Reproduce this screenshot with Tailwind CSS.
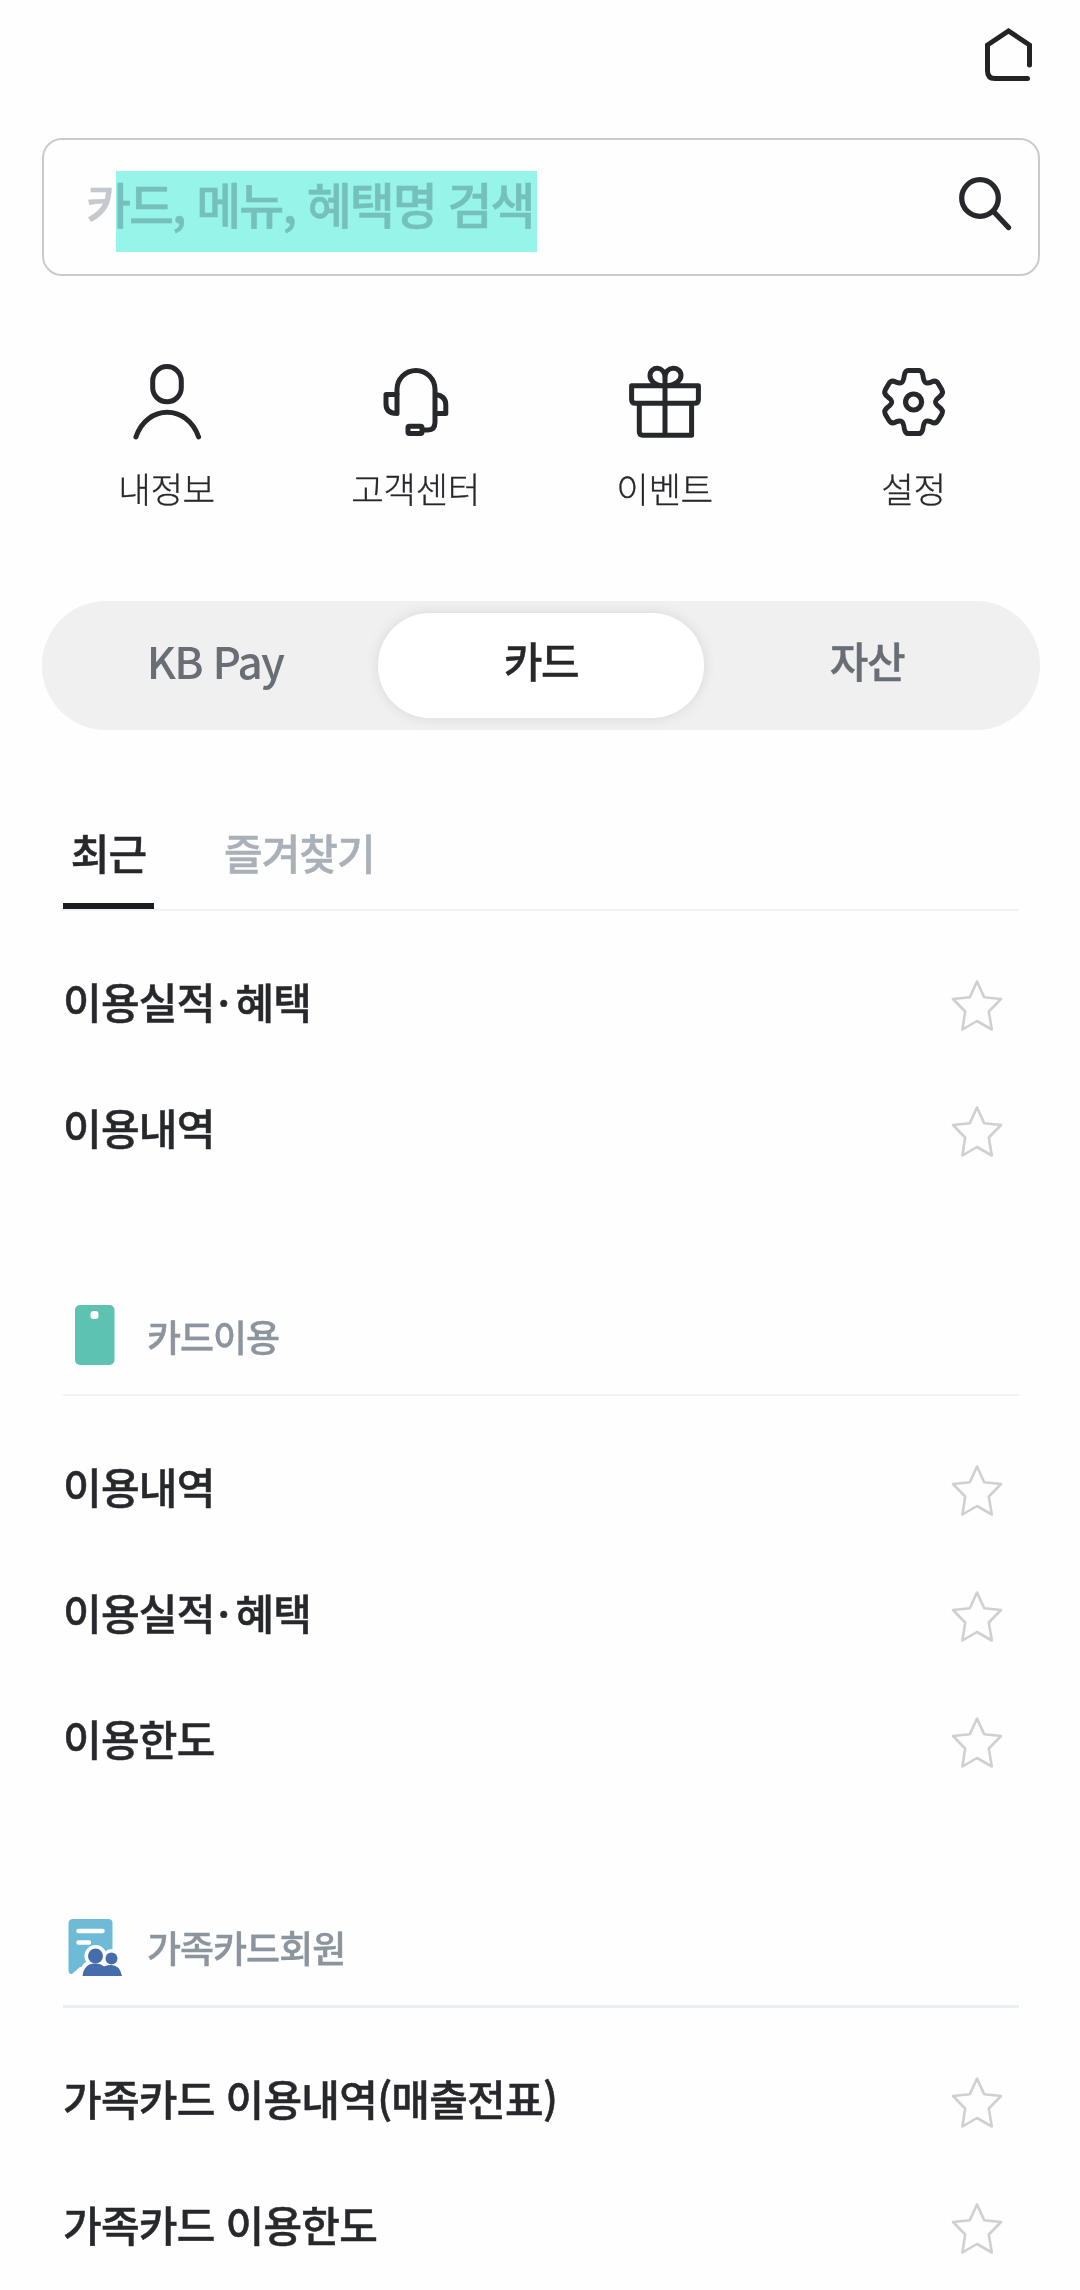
<!DOCTYPE html>
<html lang="ko">
<head>
<meta charset="utf-8">
<title>전체메뉴</title>
<script src="https://cdn.jsdelivr.net/npm/@tailwindcss/browser@4"></script>
</head>
<body class="w-[1080px] h-[2290px] overflow-hidden bg-[#fefefe] font-['Noto_Sans_CJK_KR',sans-serif] text-[#27282c]">
<svg class="hidden">
  <symbol id="star" viewBox="0 0 52 54"><path d="M26 3.500 33.200 19.300 50 21 37.800 33.500 40.800 51.500 26 43 11.400 51.500 14.200 33.500 2 21 18.800 19.300Z" fill="none" stroke="#d0d0d0" stroke-width="2.600" stroke-linejoin="round"/></symbol>
</svg>
<header class="flex h-[138px] justify-end pt-7 pr-[47px]">
  <svg class="h-[54px] w-[50px]" viewBox="0 0 50 54" fill="none" stroke="#232323" stroke-width="5" stroke-linecap="round" stroke-linejoin="miter"><path d="M46.500 37V17L25.500 3 4.500 17V43Q4.500 50.500 12 50.500H44.500"/></svg>
</header>
<main>
  <div class="mx-[42px] flex h-[138px] w-[998px] items-start justify-between rounded-[20px] border-2 border-[#c8ccd1] pl-[42px] pr-[26px]">
    <div class="relative mt-[31px] h-[81px] w-[452px] whitespace-nowrap text-[49px] font-medium leading-[64px] tracking-[-2.050px] text-[#c5c8cd] [-webkit-text-stroke:0.5px]">카드, 메뉴, 혜택명 검색<div class="absolute top-0 left-[30px] h-[81px] w-[421px] bg-[#98f5ea] mix-blend-multiply"></div></div>
    <svg class="mt-9 h-[56px] w-[56px]" viewBox="0 0 56 56" fill="none" stroke="#27282c" stroke-width="5.300" stroke-linecap="round"><circle cx="24" cy="22" r="18.300"/><path d="M38 36 52.500 51.500"/></svg>
  </div>

  <nav class="mx-[42px] mt-[84px] grid h-[241px] grid-cols-4 text-[35.500px] font-light leading-[52px] tracking-[-0.500px] [-webkit-text-stroke:0.3px]">
    <a class="flex flex-col items-center gap-[22px]">
      <svg class="h-20 w-[74px]" viewBox="0 0 74 80" fill="none" stroke="#27282c" stroke-width="5" stroke-linecap="round"><rect x="22.700" y="6.500" width="28.600" height="35.300" rx="14.300"/><path d="M5.900 77C17 44 57.500 44 68.600 77"/></svg>
      <span class="whitespace-nowrap">내정보</span></a>
    <a class="flex flex-col items-center gap-[22px]">
      <svg class="h-20 w-[74px]" viewBox="0 0 74 80" fill="none" stroke="#27282c" stroke-width="5" stroke-linejoin="round"><path d="M18 35V29.500a19 19 0 0 1 38 0V62Q56 70 49 70H43"/><path d="M18 34.500H7V44Q7 53.500 18 53.500ZM56 34.500Q66.800 35.500 66.800 45V53.500H56"/><rect x="29" y="66.300" width="14" height="7.300" rx="1.500"/></svg>
      <span class="whitespace-nowrap">고객센터</span></a>
    <a class="flex flex-col items-center gap-[22px]">
      <svg class="h-20 w-[74px]" viewBox="0 0 74 80" fill="none" stroke="#27282c" stroke-width="5" stroke-linejoin="round"><path d="M3.600 25.800H70.400V39.500Q70.400 43.300 66.500 43.300H7.500Q3.600 43.300 3.600 39.500ZM11.300 43.300V71.500Q11.300 75.200 15 75.200H63.600V43.300M37 75.200V18M37 25.800C26 25.800 22 20 22 15.500 22 6 37 5 37 18 37 5 53 6 53 15.500 53 20 48 25.800 37 25.800"/></svg>
      <span class="whitespace-nowrap">이벤트</span></a>
    <a class="flex flex-col items-center gap-[22px]">
      <svg class="h-20 w-[74px]" viewBox="0 0 74 80" fill="none" stroke="#27282c" stroke-width="5.200" stroke-linejoin="round"><g transform="translate(36.600 42) scale(.93 .97) translate(-37 -41)"><path d="M31 8.500H43Q46 8.500 47 13.500C48 21 50 23 56 20.500Q61 18 63.500 22L67.500 28.500Q69.500 32.500 65 35.500C59 40 59 42 65 46.500Q69.500 49.500 67.500 53.500L63.500 60Q61 64 56 61.500C50 59 48 61 47 68.500Q46 73.500 43 73.500H31Q28 73.500 27 68.500C26 61 24 59 18 61.500Q13 64 10.500 60L6.500 53.500Q4.500 49.500 9 46.500C15 42 15 40 9 35.500Q4.500 32.500 6.500 28.500L10.500 22Q13 18 18 20.500C24 23 26 21 27 13.500Q28 8.500 31 8.500Z"/></g><circle cx="36.600" cy="42" r="8"/></svg>
      <span class="whitespace-nowrap">설정</span></a>
  </nav>

  <div class="mx-[42px] flex h-[129px] w-[998px] items-center justify-between rounded-[64px] bg-[#f0f0f0] px-[10px] text-[42px] font-medium leading-[94px] text-[#696e76] [-webkit-text-stroke:0.4px]">
    <div class="h-[105px] w-[326px] text-center text-[44px] tracking-[-1.700px] [-webkit-text-stroke:0px]">KB Pay</div>
    <div class="h-[105px] w-[326px] rounded-[52px] bg-white text-center tracking-[-1.500px] text-[#27282c] shadow-[0_0_14px_rgba(0,0,0,0.1)]">카드</div>
    <div class="h-[105px] w-[326px] text-center tracking-[-1.500px]">자산</div>
  </div>

  <section class="mx-[63px] w-[956px]">
    <div class="flex h-[181px] items-end gap-[70px] border-b-2 border-[#f0f2f5] text-[42px] font-medium leading-[58px] tracking-[-1px] text-[#a9b0b8] [-webkit-text-stroke:0.5px]">
      <div class="h-[86px] w-[91px] border-b-6 border-[#1b1c22] text-center text-[#27282c]">최근</div>
      <div class="h-[86px] whitespace-nowrap">즐겨찾기</div>
    </div>
    <ul class="pt-[31px] text-[42px] font-medium tracking-[-0.750px] [-webkit-text-stroke:0.5px]">
      <li class="flex h-[126px] items-center justify-between pr-4"><span class="pb-2.5">이용실적<span class="mr-[6px] ml-[3px]">·</span>혜택</span><svg class="h-[54px] w-[52px]"><use href="#star"/></svg></li>
      <li class="flex h-[126px] items-center justify-between pr-4"><span class="pb-2.5">이용내역</span><svg class="h-[54px] w-[52px]"><use href="#star"/></svg></li>
    </ul>
  </section>

  <section class="mx-[63px] w-[956px]">
    <div class="flex h-[202px] items-end border-b-2 border-[#eef2f3] pb-[27px]">
      <svg class="h-[64px] w-[64px]" viewBox="0 0 64 64"><rect x="12" y="2" width="39.500" height="60" rx="5" fill="#5dc2b1"/><rect x="27.500" y="8" width="8" height="8" rx="3" fill="#fff"/></svg>
      <span class="ml-5 text-[37px] font-medium leading-[62px] tracking-[-1px] text-[#8c949e] [-webkit-text-stroke:0.4px]">카드이용</span>
    </div>
    <ul class="pt-[31px] text-[42px] font-medium tracking-[-0.750px] [-webkit-text-stroke:0.5px]">
      <li class="flex h-[126px] items-center justify-between pr-4"><span class="pb-2.5">이용내역</span><svg class="h-[54px] w-[52px]"><use href="#star"/></svg></li>
      <li class="flex h-[126px] items-center justify-between pr-4"><span class="pb-2.5">이용실적<span class="mr-[6px] ml-[3px]">·</span>혜택</span><svg class="h-[54px] w-[52px]"><use href="#star"/></svg></li>
      <li class="flex h-[126px] items-center justify-between pr-4"><span class="pb-2.5">이용한도</span><svg class="h-[54px] w-[52px]"><use href="#star"/></svg></li>
    </ul>
  </section>

  <section class="mx-[63px] w-[956px]">
    <div class="flex h-[203px] items-end border-b-3 border-[#ebeff3] pb-[26px]">
      <svg class="h-[64px] w-[64px]" viewBox="0 0 64 64"><path d="M10 4H45Q49.500 4 49.500 8V52H17L9 59Q5.500 59.500 5.500 55V8.500Q5.500 4 10 4Z" fill="#6dbbd6"/><path d="M15.500 16H39.500M15.500 27.500H26" stroke="#fff" stroke-width="4.500" stroke-linecap="round"/><g fill="#fff" stroke="#fff" stroke-width="7"><path d="M19.500 61Q21 48 32 48 38 48 41 51 56 45 59 61Z"/><circle cx="32.500" cy="41" r="7.500"/><circle cx="48.500" cy="43.500" r="6"/></g><g fill="#456cab"><path d="M19.500 61Q21 48.500 32 48.500 38 48.500 41 51.500 56 46 59 61Z"/><circle cx="32.500" cy="41" r="7.500"/><circle cx="48.500" cy="43.500" r="6"/></g></svg>
      <span class="ml-5 text-[37px] font-medium leading-[64px] tracking-[-1px] text-[#8c949e] [-webkit-text-stroke:0.4px]">가족카드회원</span>
    </div>
    <ul class="pt-[31px] text-[42px] font-medium tracking-[-0.750px] [-webkit-text-stroke:0.5px]">
      <li class="flex h-[126px] items-center justify-between pr-4"><span class="pb-2.5">가족카드 이용내역(매출전표)</span><svg class="h-[54px] w-[52px]"><use href="#star"/></svg></li>
      <li class="flex h-[126px] items-center justify-between pr-4"><span class="pb-2.5">가족카드 이용한도</span><svg class="h-[54px] w-[52px]"><use href="#star"/></svg></li>
    </ul>
  </section>
</main>
</body>
</html>
